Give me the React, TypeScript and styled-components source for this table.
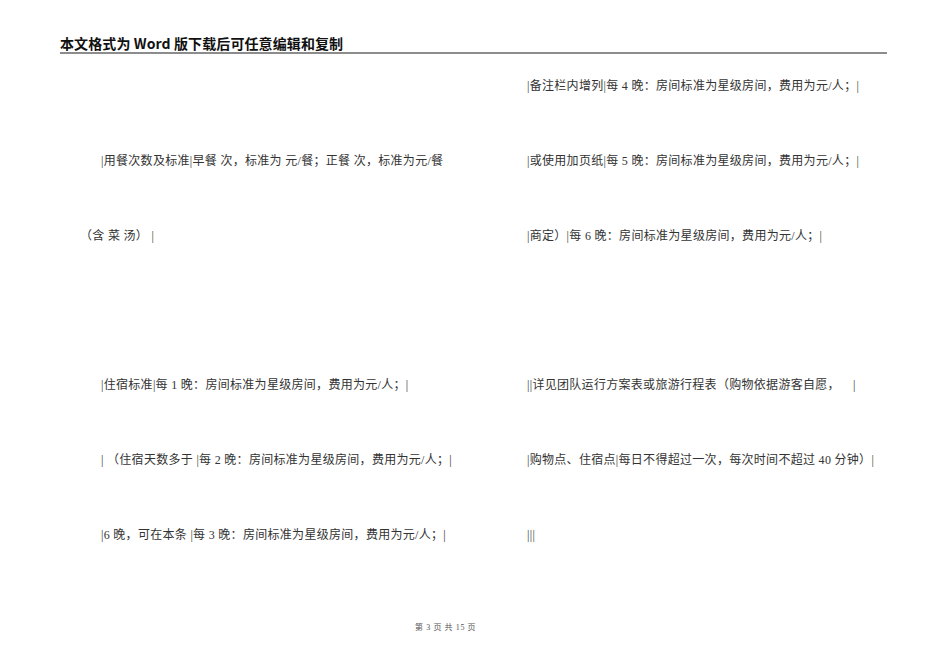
import React from "react";
import styled, { createGlobalStyle } from "styled-components";

const GlobalStyle = createGlobalStyle`
  html, body {
    margin: 0;
    padding: 0;
    background: #fff;
  }
  body {
    font-family: "Liberation Serif", "Noto Sans CJK SC", serif;
  }
`;

interface RowItem {
  text: string;
  indent?: number;
}

const leftRows: (RowItem | null)[] = [
  null,
  { text: "|用餐次数及标准|早餐 次，标准为 元/餐；正餐 次，标准为元/餐", indent: 21 },
  { text: "（含 菜 汤） |" },
  null,
  { text: "|住宿标准|每 1 晚：房间标准为星级房间，费用为元/人；|", indent: 21 },
  { text: "| （住宿天数多于 |每 2 晚：房间标准为星级房间，费用为元/人；|", indent: 21 },
  { text: "|6 晚，可在本条 |每 3 晚：房间标准为星级房间，费用为元/人；|", indent: 21 },
];

const rightRows: (RowItem | null)[] = [
  { text: "|备注栏内增列|每 4 晚：房间标准为星级房间，费用为元/人；|" },
  { text: "|或使用加页纸|每 5 晚：房间标准为星级房间，费用为元/人；|" },
  { text: "|商定）|每 6 晚：房间标准为星级房间，费用为元/人；|" },
  null,
  { text: "||详见团队运行方案表或旅游行程表（购物依据游客自愿，    |" },
  { text: "|购物点、住宿点|每日不得超过一次，每次时间不超过 40 分钟）|" },
  { text: "|||" },
];

const App: React.FC = () => {
  return (
    <>
      <GlobalStyle />
      <Page>
        <Header>
          <HeaderTitle>本文格式为 Word 版下载后可任意编辑和复制</HeaderTitle>
        </Header>
        <Columns>
          <Column>
            {leftRows.map((row, i) => (
              <Line key={i} indent={row?.indent ?? 0}>
                {row ? row.text : "\u00a0"}
              </Line>
            ))}
          </Column>
          <Column>
            {rightRows.map((row, i) => (
              <Line key={i} indent={row?.indent ?? 0}>
                {row ? row.text : "\u00a0"}
              </Line>
            ))}
          </Column>
        </Columns>
        <Footer>第 3 页 共 15 页</Footer>
      </Page>
    </>
  );
};

const Page = styled.div`
  width: 950px;
  height: 672px;
  box-sizing: border-box;
  padding: 0 63px 0 60px;
  display: flex;
  flex-direction: column;
`;

const Header = styled.div`
  padding-top: 35px;
  border-bottom: 2px solid #8c8c8c;
  padding-bottom: 1px;
`;

const HeaderTitle = styled.div`
  font-family: "Noto Sans CJK SC", "Liberation Sans", sans-serif;
  font-weight: 700;
  font-size: 14px;
  line-height: 16px;
  color: #111;
  letter-spacing: 0.1px;
`;

const Columns = styled.div`
  display: grid;
  grid-template-columns: 447px 1fr;
  padding-left: 20px;
  margin-top: 24px;
`;

const Column = styled.div`
  display: grid;
  grid-auto-rows: 74.83px;
`;

const Line = styled.div<{ indent: number }>`
  padding-left: ${({ indent }) => indent}px;
  font-family: "Liberation Serif", "Noto Sans CJK SC", serif;
  font-size: 12px;
  line-height: 16px;
  color: #333;
  letter-spacing: 0.3px;
  white-space: pre;
`;

const Footer = styled.div`
  margin-top: 20px;
  padding-left: 355px;
  font-family: "Liberation Serif", "Noto Sans CJK SC", serif;
  font-size: 8px;
  line-height: 12px;
  color: #555;
  letter-spacing: 0.6px;
  white-space: pre;
`;

export default App;
